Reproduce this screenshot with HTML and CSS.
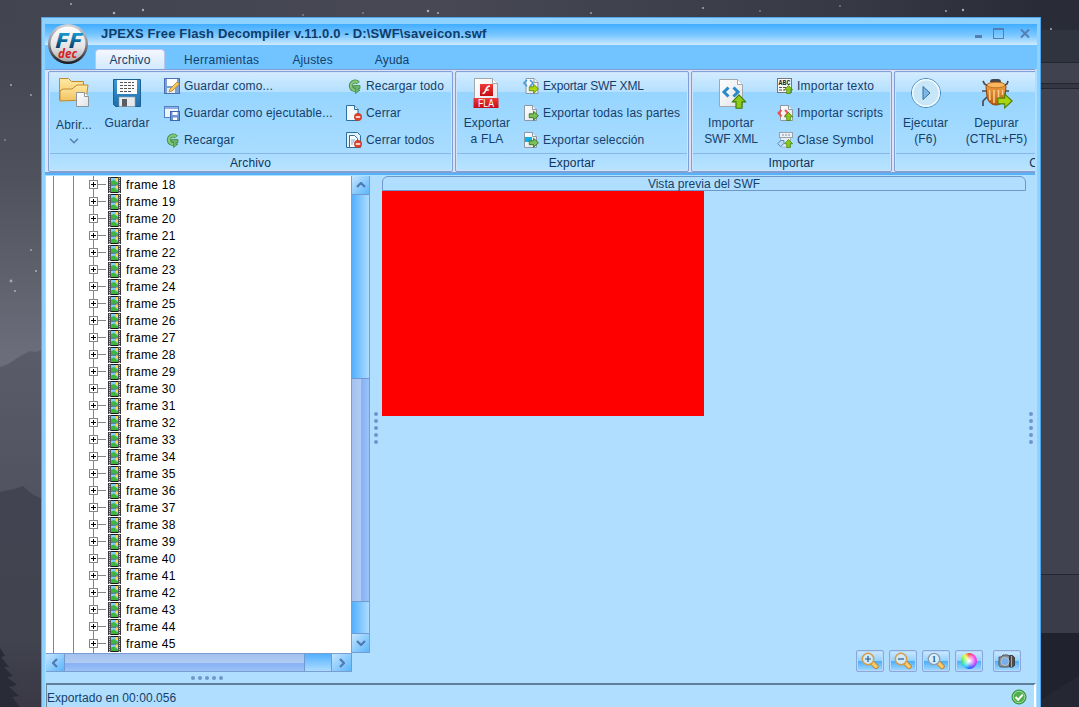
FILE: index.html
```html
<!DOCTYPE html>
<html lang="es">
<head>
<meta charset="utf-8">
<title>JPEXS Free Flash Decompiler</title>
<link rel="stylesheet" href="styles.css">
</head>
<body>
<svg class="defs" width="0" height="0">
  <defs>
    <linearGradient id="gFolder" x1="0" y1="0" x2="0" y2="1"><stop offset="0" stop-color="#ffe9a4"/><stop offset="1" stop-color="#f2c25e"/></linearGradient>
    <linearGradient id="gBlue" x1="0" y1="0" x2="0" y2="1"><stop offset="0" stop-color="#3d9ad6"/><stop offset="1" stop-color="#1f6ea8"/></linearGradient>
    <linearGradient id="gPaper" x1="0" y1="0" x2="1" y2="1"><stop offset="0" stop-color="#fff"/><stop offset="1" stop-color="#dfe3e6"/></linearGradient>
    <linearGradient id="gBug" x1="0" y1="0" x2="0" y2="1"><stop offset="0" stop-color="#f7a94a"/><stop offset="1" stop-color="#b85a0a"/></linearGradient>
    <linearGradient id="gBall" x1="0" y1="0" x2="0" y2="1"><stop offset="0" stop-color="#fff"/><stop offset=".6" stop-color="#e3e3e6"/><stop offset="1" stop-color="#a9a9ae"/></linearGradient>
    <linearGradient id="gRim" x1="0" y1="0" x2="0" y2="1"><stop offset="0" stop-color="#d2d4d8"/><stop offset=".5" stop-color="#8a8c92"/><stop offset="1" stop-color="#17181c"/></linearGradient>
    <linearGradient id="gFF" x1="0" y1="0" x2="0" y2="1"><stop offset=".1" stop-color="#19b4ee"/><stop offset=".8" stop-color="#073c66"/></linearGradient>
    <linearGradient id="gRed" x1="0" y1="0" x2="0" y2="1"><stop offset="0" stop-color="#ef3b3b"/><stop offset="1" stop-color="#c40d12"/></linearGradient>
    <symbol id="film" viewBox="0 0 13 16">
      <rect width="13" height="16" fill="#55555a"/><path d="M3 .500h7M3 8h7M3 15.500h7" stroke="#1d1d20"/>
      <rect x="3" y="1" width="7" height="6.500" fill="#7fd0fa"/><rect x="3" y="8.500" width="7" height="6.500" fill="#7fd0fa"/>
      <path d="M3 4l3-1 4 3v1.500H3zM3 11.500l3-1 4 3V15H3z" fill="#3fb63c"/><path d="M8 1h2v3H8zM8 8.500h2v3H8z" fill="#ffd84a"/>
      <path d="M1.500 1v15M11.500 1v15" stroke="#c9c9cd" stroke-dasharray="1 1"/>
      <path d="M.500 0v16M12.500 0v16" stroke="#38383c"/>
    </symbol>
    <symbol id="page" viewBox="0 0 16 16"><path d="M1.500.5h8l4 4v11h-12z" fill="url(#gPaper)" stroke="#8b98a5"/><path d="M9.500.5v4h4" fill="#f4f6f8" stroke="#8b98a5"/></symbol>
    <symbol id="bluepage" viewBox="0 0 16 16"><path d="M1.500.5h8l3.500 3.500v11.500H1.500z" fill="#f2f8fc" stroke="#2b6f9e"/><path d="M9.500.5v4h4" fill="#d5e9f6" stroke="#2b6f9e"/></symbol>
    <symbol id="minus" viewBox="0 0 8 8"><circle cx="4" cy="4" r="3.700" fill="#dd4430" stroke="#b92d1c" stroke-width=".6"/><path d="M1.800 4h4.400" stroke="#fff" stroke-width="1.500"/></symbol>
    <symbol id="right" viewBox="0 0 11 11"><path d="M.6 3.500h4.700V.8L10.400 5.500 5.300 10.200V7.500H.6z" fill="#7fbf58" stroke="#33782a" stroke-width="1"/></symbol>
    <symbol id="lime" viewBox="0 0 11 11"><path d="M.6 3.500h4.700V.8L10.400 5.500 5.300 10.200V7.500H.6z" fill="#a9d60e" stroke="#4f7f0c" stroke-width=".8"/></symbol>
    <symbol id="up" viewBox="0 0 10 10"><path d="M5 .6L9.500 5.300H7V9.500H3V5.300H.5z" fill="#8ccc16" stroke="#3f7a0c" stroke-width=".8"/></symbol>
    <symbol id="reload" viewBox="0 0 16 16">
      <path d="M12.300 5A4.300 4.300 0 1 0 9 12.100" fill="none" stroke="#3e8b44" stroke-width="4"/>
      <path d="M12 4.600A4.300 4.300 0 1 0 9 12.100" fill="none" stroke="#86c67c" stroke-width="2.400"/>
      <path d="M7.500 7.500h6.500v3h-1.800v1.500H14L9.500 15.500V9.800H7.500z" fill="#6ab56a" stroke="#3e8b44" stroke-width=".8"/>
    </symbol>
    <symbol id="lens" viewBox="0 0 20 18">
      <path d="M12 10.500l4 4" stroke="#b07a26" stroke-width="5.200" stroke-linecap="round"/>
      <path d="M12 10.500l4 4" stroke="#fbc966" stroke-width="3.600" stroke-linecap="round"/>
    </symbol>
  </defs>
</svg>

<div class="desktop">
  <svg class="wallpaper" viewBox="0 0 1079 707" width="1079" height="707">
    <defs>
      <linearGradient id="sky" x1="0" y1="0" x2="0" y2="1"><stop offset="0" stop-color="#40434d"/><stop offset=".25" stop-color="#4f515c"/><stop offset=".5" stop-color="#6b6e7a"/><stop offset="1" stop-color="#6b6e7a"/></linearGradient>
      <linearGradient id="hill" x1="0" y1="0" x2="0" y2="1"><stop offset="0" stop-color="#5a5d69"/><stop offset="1" stop-color="#50535f"/></linearGradient>
      <linearGradient id="near" x1="0" y1="0" x2="0" y2="1"><stop offset="0" stop-color="#424551"/><stop offset=".7" stop-color="#41434f"/><stop offset="1" stop-color="#3a3845"/></linearGradient>
      <linearGradient id="top" x1="0" y1="0" x2="1" y2="0"><stop offset="0" stop-color="#42444f"/><stop offset=".4" stop-color="#474853"/><stop offset=".8" stop-color="#363944"/><stop offset="1" stop-color="#262933"/></linearGradient>
    </defs>
    <rect width="1079" height="707" fill="url(#sky)"/>
    <rect width="1079" height="30" fill="url(#top)"/>
    <path d="M0 367l8-3 14-9 8-4 5 1 7-2v160H0z" fill="url(#hill)"/>
    <path d="M0 492l14-3 9-3 9 8 10 5v208H0z" fill="url(#near)"/>
    <path d="M0 648l5 8-4 1 8 10-5 0 9 9-6 1 10 8-8 2 10 9-7 1 8 10H0z" fill="#292b36"/>
    <g fill="#a9abb3">
      <circle cx="114" cy="13" r="1.300"/><circle cx="143" cy="10" r="1.200"/><circle cx="11" cy="281" r="1.400"/><circle cx="15" cy="291" r="1.100"/><circle cx="31" cy="250" r=".9"/><circle cx="11" cy="85" r="1"/><circle cx="31" cy="95" r=".9"/><circle cx="5" cy="140" r=".8"/><circle cx="36" cy="271" r="1.100"/><circle cx="428" cy="11" r="1.300"/><circle cx="438" cy="13" r="1"/><circle cx="303" cy="15" r=".8"/><circle cx="363" cy="13" r=".8"/><circle cx="591" cy="13" r=".9"/><circle cx="703" cy="8" r="1"/><circle cx="760" cy="11" r=".8"/><circle cx="946" cy="11" r="1"/><circle cx="963" cy="10" r="1.200"/><circle cx="71" cy="4" r="1"/><circle cx="840" cy="6" r=".8"/>
    </g>
    <path d="M1040 0h39v31h-39z" fill="#292c36"/><circle cx="1051" cy="29" r="1" fill="#a9abb3"/>
    <path d="M1040 30h39v604h-39z" fill="#40434f"/>
    <path d="M1040 30h39v32h-39z" fill="#30343f"/>
    <path d="M1040 62.500h39M1040 83.500h39M1040 88.500h39M1040 574.500h39" stroke="#23262f"/>
    <path d="M1040 84h39v4h-39z" fill="#353843"/>
    <path d="M1040 575h39v58h-39z" fill="#3a3d49"/>
    <path d="M1040 633h39v74h-39z" fill="#20232d"/><path d="M1040 700l39-24v31h-39z" fill="#252832"/>
  </svg>

  <main class="window">
    <svg class="logo" viewBox="0 0 42 42" width="42" height="42">
      <circle cx="21" cy="21" r="20" fill="url(#gRim)"/><circle cx="21" cy="21" r="17.500" fill="url(#gBall)"/>
      <text x="8" y="25" textLength="27" lengthAdjust="spacingAndGlyphs" class="logo-ff">FF</text>
      <text x="11" y="35" textLength="19" lengthAdjust="spacingAndGlyphs" class="logo-dec">dec</text>
    </svg>
    <header class="titlebar">
      <h1>JPEXS Free Flash Decompiler v.11.0.0 - D:\SWF\saveicon.swf</h1>
      <svg class="winbtns" width="58" height="16" viewBox="0 0 58 16" fill="none" stroke="#557eb3">
        <path d="M2 11.500h7" stroke-width="3"/><rect x="20.500" y="4" width="10" height="9.500"/><path d="M20 4h11" stroke-width="2"/><path d="M48 4.500l8 8M56 4.500l-8 8" stroke-width="2"/>
      </svg>
    </header>
    <nav class="tabs">
      <a class="tab active">Archivo</a><a class="tab t2">Herramientas</a><a class="tab t3">Ajustes</a><a class="tab t4">Ayuda</a>
    </nav>

    <section class="ribbon">
      <div class="band b1">
        <div class="tools">
          <div class="big abrir">
            <svg width="34" height="34" viewBox="0 0 34 34"><path d="M2.500 25V3.500h9l3 3h12V25z" fill="url(#gFolder)" stroke="#c28a30"/><path d="M3 26V16l3-2h9l5-4h11l-2 15z" fill="url(#gFolder)" stroke="#c28a30"/><path d="M19.500 17.500h8l4 4v10h-12z" fill="url(#gPaper)" stroke="#8b959e"/><path d="M27.500 17.500v4h4" fill="#fff" stroke="#8b959e"/></svg>
            <span>Abrir...</span>
            <svg class="chev" width="10" height="6" viewBox="0 0 10 6"><path d="M1 .8l4 4 4-4" fill="none" stroke="#557eb3" stroke-width="1.500"/></svg>
          </div>
          <div class="big guardar">
            <svg width="32" height="32" viewBox="0 0 32 32"><path d="M2.500 2.500h27v27h-25l-2-2z" fill="url(#gBlue)" stroke="#1c6194"/><rect x="6" y="3" width="20" height="14" fill="#f8fafb"/><path d="M9 5.500h14M9 8.500h14M9 11.500h14M9 14.500h12" stroke="#555" stroke-dasharray="3 1"/><rect x="8" y="20" width="16" height="9.500" fill="#e6e9ec" stroke="#97a4ae" stroke-width=".6"/><rect x="11" y="22" width="5" height="7.500" fill="#5a5d61"/></svg>
            <span>Guardar</span>
          </div>
          <div class="list l1">
            <div><svg viewBox="0 0 16 16"><rect x=".5" y=".5" width="15" height="15" fill="#7ba0d8" stroke="#4a70b4"/><rect x="3" y="1" width="10" height="7" fill="#fff"/><rect x="3" y="10" width="8" height="5" fill="#e8edf5"/><path d="M5 14l1-3 7-7 2.500 2-7.500 7z" fill="#f9c95c" stroke="#b9832e" stroke-width=".8"/></svg><span>Guardar como...</span></div>
            <div><svg viewBox="0 0 16 16"><rect x=".5" y="1.500" width="14" height="11" fill="#eef4fc" stroke="#547fc3"/><path d="M1 3h13" stroke="#8cb0e4" stroke-width="2"/><rect x="6.500" y="6.500" width="9" height="9" fill="#6e96d3" stroke="#3c66ad"/><path d="M8.500 7h5v3h-5zM9 12.500h4V15H9z" fill="#fff"/></svg><span>Guardar como ejecutable...</span></div>
            <div><svg viewBox="0 0 16 16"><use href="#reload"/></svg><span>Recargar</span></div>
          </div>
          <div class="list l2">
            <div><svg viewBox="0 0 16 16"><use href="#reload"/></svg><span>Recargar todo</span></div>
            <div><svg viewBox="0 0 16 16"><use href="#bluepage" x="-1"/><use href="#minus" x="8" y="8" width="8" height="8"/></svg><span>Cerrar</span></div>
            <div><svg viewBox="0 0 16 16"><path d="M.500.500h11l3 3v12H.500z" fill="#e6f2fa" stroke="#2b6f9e"/><path d="M3.500 3.500h5l3 3v9h-8z" fill="#f8fcff" stroke="#2b6f9e"/><path d="M5 8h4M5 10h3M5 12h2" stroke="#7faed0"/><use href="#minus" x="8" y="8" width="8" height="8"/></svg><span>Cerrar todos</span></div>
          </div>
        </div>
        <footer>Archivo</footer>
      </div>
      <div class="band b2">
        <div class="tools">
          <div class="big fla">
            <svg width="32" height="32" viewBox="0 0 32 32"><path d="M3.500 1.500h18l5 5v24h-23z" fill="url(#gPaper)" stroke="#a3a7ab"/><path d="M21.500 1.500v5h5" fill="#fff" stroke="#a3a7ab"/><rect x="9" y="7" width="13" height="12" fill="url(#gRed)"/><path d="M19 9c-3.500 0-3.500 2.500-4.300 4.500-.7 1.700-1.500 3-3.200 3M13.800 13h4" fill="none" stroke="#fff" stroke-width="1.600"/><path d="M2.500 21h25v10h-25z" fill="url(#gRed)"/><text x="7" y="29.500" textLength="16" lengthAdjust="spacingAndGlyphs" class="fla-text">FLA</text></svg>
            <span>Exportar<br>a FLA</span>
          </div>
          <div class="list l3">
            <div><svg viewBox="0 0 16 16"><use href="#page" x="1.500"/><path d="M4 2L1 5l3 3.500M7 2l3 3-3 3.500" fill="none" stroke="#4a9ddb" stroke-width="1.700"/><use href="#lime" x="5.500" y="5.500" width="10.500" height="10.500"/></svg><span class="caps">Exportar SWF XML</span></div>
            <div><svg viewBox="0 0 16 16"><use href="#page"/><use href="#right" x="5.500" y="5.500" width="10.500" height="10.500"/></svg><span>Exportar todas las partes</span></div>
            <div><svg viewBox="0 0 16 16"><use href="#page"/><rect x="2" y="5" width="7" height="5" fill="#12afe2"/><use href="#right" x="5.500" y="5.500" width="10.500" height="10.500"/></svg><span>Exportar selección</span></div>
          </div>
        </div>
        <footer>Exportar</footer>
      </div>
      <div class="band b3">
        <div class="tools">
          <div class="big xml">
            <svg width="32" height="32" viewBox="0 0 32 32"><path d="M4.500 2.500h18l5 5v22h-23z" fill="url(#gPaper)" stroke="#a3a7ab"/><path d="M22.500 2.500v5h5" fill="#fff" stroke="#a3a7ab"/><path d="M13.500 10.500L9 15l4.500 4.500M18.500 10.500L23 15l-4.500 4.500" fill="none" stroke="#2989c9" stroke-width="3"/><use href="#up" x="16.500" y="17" width="15" height="15"/></svg>
            <span>Importar<br><b class="caps">SWF XML</b></span>
          </div>
          <div class="list l4">
            <div><svg viewBox="0 0 16 16"><rect x=".5" y=".5" width="14" height="14" fill="#f7f7f7" stroke="#777"/><text x="1.500" y="6.500" textLength="12" class="abc">ABC</text><path d="M2 9.500h9M2 12h6" stroke="#555" stroke-dasharray="3 1"/><use href="#up" x="7" y="7" width="9" height="9"/></svg><span>Importar texto</span></div>
            <div><svg viewBox="0 0 16 16"><use href="#page" x="2"/><path d="M4.500 5L1.500 8l3 3.500M8 5l3 3-3 3.500" fill="none" stroke="#f05050" stroke-width="2"/><use href="#up" x="7" y="7" width="9" height="9"/></svg><span>Importar scripts</span></div>
            <div><svg viewBox="0 0 16 16"><rect x="2.500" y=".5" width="13" height="5" fill="#eef1f4" stroke="#96a2ae"/><path d="M5 3h8" stroke="#7a8fa8" stroke-dasharray="2 1"/><path d="M3.500 6v9h10V6" fill="#e5ecf3" stroke="#a8b4c0"/><path d="M.5 11.500l3.500-3h3v3l-3.500 3z" fill="#bad9f3" stroke="#4f8fc9"/><use href="#up" x="7" y="7" width="9" height="9"/></svg><span>Clase Symbol</span></div>
          </div>
        </div>
        <footer>Importar</footer>
      </div>
      <div class="band b4">
        <div class="tools">
          <div class="big run">
            <svg width="32" height="32" viewBox="0 0 32 32"><circle cx="16" cy="16" r="14.500" fill="#c7e7f9" stroke="#3d80b4"/><circle cx="16" cy="16" r="13.300" fill="none" stroke="#f3fbff" stroke-width="1.500"/><path d="M13 9.500l7 6.500-7 6.500z" fill="#7db9e4" stroke="#2e6ea3"/></svg>
            <span>Ejecutar<br>(F6)</span>
          </div>
          <div class="big debug">
            <svg width="34" height="32" viewBox="0 0 34 32"><path d="M8 9L4.500 7 3 4M23 9l4-2 1-3M6 14H2M25 14h4M7 20l-4 4v5" fill="none" stroke="#474c55" stroke-width="1.700"/><path d="M10 5q0-3 3-3h5q3 0 3 3z" fill="#42464e"/><path d="M6 9c3-5 17-5 20 0l-1 11c-1 5-5 8-9 8s-8-3-9-8z" fill="url(#gBug)" stroke="#904508"/><ellipse cx="16" cy="8" rx="9" ry="2.800" fill="#f9b75f" stroke="#a95c12" stroke-width=".7"/><path d="M9.500 13l.5 10M14 13v13M18.500 13v13M22.500 13v5" stroke="#f9cb8c" stroke-width="1.600"/><use href="#lime" x="17" y="16" width="16" height="16"/></svg>
            <span>Depurar<br>(CTRL+F5)</span>
          </div>
        </div>
        <footer>Control</footer>
      </div>
    </section>

    <div class="content">
      <aside class="side">
        <div class="treewrap">
          <ul class="tree">
            <li><svg><use href="#film"/></svg>frame 18</li>
            <li><svg><use href="#film"/></svg>frame 19</li>
            <li><svg><use href="#film"/></svg>frame 20</li>
            <li><svg><use href="#film"/></svg>frame 21</li>
            <li><svg><use href="#film"/></svg>frame 22</li>
            <li><svg><use href="#film"/></svg>frame 23</li>
            <li><svg><use href="#film"/></svg>frame 24</li>
            <li><svg><use href="#film"/></svg>frame 25</li>
            <li><svg><use href="#film"/></svg>frame 26</li>
            <li><svg><use href="#film"/></svg>frame 27</li>
            <li><svg><use href="#film"/></svg>frame 28</li>
            <li><svg><use href="#film"/></svg>frame 29</li>
            <li><svg><use href="#film"/></svg>frame 30</li>
            <li><svg><use href="#film"/></svg>frame 31</li>
            <li><svg><use href="#film"/></svg>frame 32</li>
            <li><svg><use href="#film"/></svg>frame 33</li>
            <li><svg><use href="#film"/></svg>frame 34</li>
            <li><svg><use href="#film"/></svg>frame 35</li>
            <li><svg><use href="#film"/></svg>frame 36</li>
            <li><svg><use href="#film"/></svg>frame 37</li>
            <li><svg><use href="#film"/></svg>frame 38</li>
            <li><svg><use href="#film"/></svg>frame 39</li>
            <li><svg><use href="#film"/></svg>frame 40</li>
            <li><svg><use href="#film"/></svg>frame 41</li>
            <li><svg><use href="#film"/></svg>frame 42</li>
            <li><svg><use href="#film"/></svg>frame 43</li>
            <li><svg><use href="#film"/></svg>frame 44</li>
            <li><svg><use href="#film"/></svg>frame 45</li>
          </ul>
          <div class="vbar">
            <div class="sbtn"><svg width="10" height="6" viewBox="0 0 10 6"><path d="M1 5l4-4 4 4"/></svg></div>
            <div class="thumb"></div><div class="track"></div><div class="thumb end"></div>
            <div class="sbtn"><svg width="10" height="6" viewBox="0 0 10 6"><path d="M1 1l4 4 4-4"/></svg></div>
          </div>
        </div>
        <div class="hbar">
          <div class="sbtn"><svg width="6" height="10" viewBox="0 0 6 10"><path d="M5 1L1 5l4 4"/></svg></div>
          <div class="track"></div><div class="thumb"></div>
          <div class="sbtn"><svg width="6" height="10" viewBox="0 0 6 10"><path d="M1 1l4 4-4 4"/></svg></div>
        </div>
        <div class="dots row"><i></i><i></i><i></i><i></i><i></i></div>
      </aside>
      <div class="dots col"><i></i><i></i><i></i><i></i><i></i></div>
      <section class="preview">
        <h2>Vista previa del SWF</h2>
        <div class="stage"></div>
        <div class="viewbtns">
          <button><svg viewBox="0 0 20 18"><use href="#lens"/><circle cx="8" cy="7" r="5.700" fill="#cfe9fb" stroke="#d69c45" stroke-width="1.500"/><path d="M5 7h6M8 4v6" stroke="#245a8b" stroke-width="1.200"/></svg></button>
          <button><svg viewBox="0 0 20 18"><use href="#lens"/><circle cx="8" cy="7" r="5.700" fill="#cfe9fb" stroke="#d69c45" stroke-width="1.500"/><path d="M5 7h6" stroke="#245a8b" stroke-width="1.200"/></svg></button>
          <button><svg viewBox="0 0 20 18"><use href="#lens"/><circle cx="8" cy="7" r="5.700" fill="#d9eefb" stroke="#8c9cab" stroke-width="1.300"/><text x="5.800" y="10" class="one">1</text></svg></button>
          <button><i class="wheel"></i></button>
          <button class="cam"><svg viewBox="0 0 20 18"><path d="M2 5h2l2-2h5l1.500 1.500V14L11 15H3.500L2 13.500z" fill="#8b8e93" stroke="#55585d"/><path d="M12.500 3.500h3l2 2v8l-2 1.500h-3z" fill="#4f4d4c" stroke="#3b3e43"/><path d="M14.500 4v11" stroke="#b8a590"/><circle cx="8" cy="9.500" r="4" fill="#79aee8" stroke="#b4c2d2"/></svg></button>
        </div>
      </section>
      <div class="dots col right"><i></i><i></i><i></i><i></i><i></i></div>
    </div>

    <footer class="status">
      <span>Exportado en 00:00.056</span>
      <svg width="16" height="16" viewBox="0 0 16 16"><circle cx="8" cy="8" r="7" fill="#4fb04c" stroke="#2f8a35"/><circle cx="8" cy="8" r="5.800" fill="none" stroke="#a6dba0" stroke-width=".9"/><path d="M4.500 8l2.700 2.700 4.500-5" fill="none" stroke="#fff" stroke-width="2"/></svg>
    </footer>
  </main>
</div>
</body>
</html>
```
FILE: styles.css
```css
* { box-sizing: border-box; }
body { margin: 0; width: 1079px; height: 707px; overflow: hidden; font: 12px "Liberation Sans", Arial, sans-serif; letter-spacing: .15px; color: #14406b; }
svg { display: block; flex: none; }
.defs { position: absolute; }
.desktop { position: relative; width: 1079px; height: 707px; overflow: hidden; background: #40424c; }
.wallpaper { position: absolute; left: 0; top: 0; }

.window { position: absolute; left: 41px; top: 17px; width: 1000px; height: 690px; padding: 6px 3px 0; display: flex; flex-direction: column; background: #b0deff; border: 1px solid #4fa6ea; border-bottom: 0; box-shadow: inset 3px 0 #8fd2ff, inset -3px 0 #8fd2ff, inset 0 6px #8fd2ff; }
.logo { position: absolute; left: 5px; top: 5px; z-index: 2; }
.logo-ff { font: italic bold 21px "Open Sans", sans-serif; fill: url(#gFF); letter-spacing: 0; }
.logo-dec { font: italic bold 12px "Open Sans", sans-serif; fill: #d81e1e; letter-spacing: 0; }
.titlebar { height: 21px; flex: none; display: flex; justify-content: space-between; padding: 0 6px 0 56px; background: linear-gradient(#40adff, #7cc8ff 55%, #cdeaff); }
.titlebar h1 { margin: 0; font-size: 13px; line-height: 19px; letter-spacing: .16px; color: #0f3c69; white-space: nowrap; }
.winbtns { margin-top: 1px; }
.tabs { height: 24px; flex: none; display: flex; padding: 4px 0 0 50px; background: #71c4ff; }
.tab { line-height: 22px; margin-left: 19px; }
.tab.active { width: 70px; height: 22px; margin-left: 0; text-align: center; line-height: 21px; background: linear-gradient(#f4f7ff, #cfe7fd); border: 1px solid #b9c6ec; border-bottom: 0; border-radius: 4px 4px 0 0; }
.t2 { letter-spacing: .28px; }
.t3 { margin-left: 33px; }
.t4 { margin-left: 42px; }

.ribbon { height: 106px; flex: none; display: flex; gap: 2px; padding: 2px 0 2px 3px; margin-right: 2px; overflow: hidden; background: linear-gradient(#7f9fd6 1px, #dde3f6 1px 103px, #7f9fd6 103px 104px, #55b2f7 104px); }
.band { height: 101px; flex: none; display: flex; flex-direction: column; border: 1px solid #7f9fd6; box-shadow: inset 0 0 0 1px #cfe4fb; border-radius: 2px; background: linear-gradient(#d3ecff, #b4e0ff 20px, #96d5ff 20px, #a9dcff 80px, #b8e3ff); }
.b1 { width: 405px; } .b2 { width: 234px; } .b3 { width: 201px; } .b4 { width: 310px; }
.tools { height: 81px; display: flex; }
.band footer { height: 18px; margin: 0 1px; text-align: center; line-height: 18px; border-top: 1px solid #86b9e8; color: #10335a; }
.big { display: flex; flex-direction: column; align-items: center; text-align: center; line-height: 16px; white-space: nowrap; padding-top: 5px; }
.big span { margin-top: 6px; }
.abrir { width: 50px; padding-top: 3px; } .abrir span { margin-top: 8px; }
.chev { margin-top: 5px; }
.guardar { width: 56px; }
.fla { width: 62px; } .xml { width: 78px; } .run { width: 61px; } .debug { width: 81px; }
.caps { font-weight: normal; letter-spacing: -.16px; }
.list { display: flex; flex-direction: column; white-space: nowrap; }
.list div { height: 27px; display: flex; align-items: center; gap: 4px; }
.list svg { width: 16px; height: 16px; }
.l1 { width: 182px; margin-left: 9px; } .l3 { margin-left: 5px; } .l4 { margin-left: 7px; letter-spacing: .22px; }
.fla-text { font: 10px "Liberation Sans", sans-serif; fill: #fff; letter-spacing: 0; }
.abc { font: bold 6.5px "Liberation Mono", monospace; fill: #222; letter-spacing: 0; }

.content { height: 508px; flex: none; display: flex; padding-top: 1px; }
.side { width: 325px; padding-left: 1px; }
.treewrap { display: flex; height: 477px; }
.tree { width: 306px; height: 477px; margin: 0; padding: 0; overflow: hidden; list-style: none; color: #000; letter-spacing: .3px; background: linear-gradient(#858585, #858585) 7px 0/1px 100% no-repeat, linear-gradient(#858585, #858585) 27px 0/1px 100% no-repeat, linear-gradient(#858585, #858585) 47px 0/1px 100% no-repeat, #fff; }
.tree li { height: 17px; display: flex; align-items: center; gap: 5px; padding: 1px 0 0 43px; line-height: 16px; }
.tree li::before { content: ""; width: 17px; height: 9px; margin: -1px -3px 0 0; background: linear-gradient(#000, #000) 2px 4px/5px 1px no-repeat, linear-gradient(#000, #000) 4px 2px/1px 5px no-repeat, linear-gradient(#fff, #fff) 1px 1px/7px 7px no-repeat, linear-gradient(#858585, #858585) 0 0/9px 9px no-repeat, linear-gradient(#858585, #858585) 9px 4px/8px 1px no-repeat; }
.tree svg { width: 13px; height: 16px; }
.vbar { width: 19px; display: flex; flex-direction: column; border: solid #7a9ed2; border-width: 0 1px; }
.vbar > div { border-bottom: 1px solid #6f9bd0; }
.sbtn { display: flex; align-items: center; justify-content: center; background: linear-gradient(135deg, #c4e5ff, #5cb6fb); }
.sbtn path { fill: none; stroke: #5078b4; stroke-width: 2.2; }
.vbar .sbtn { height: 19px; }
.vbar .thumb { height: 184px; background: linear-gradient(90deg, #52b0ff, #aedcff); }
.vbar .track { height: 223px; background: linear-gradient(90deg, #a4c0ee, #b2ccf3 55%, #86b0f4 56%, #9cc4f8); }
.vbar .thumb.end { height: 32px; }
.hbar { width: 306px; height: 19px; display: flex; border: 1px solid #7a9ed2; border-width: 1px 0; }
.hbar > div { border-right: 1px solid #6f9bd0; }
.hbar .sbtn { width: 19px; } .hbar .sbtn:last-child { width: 20px; }
.hbar .track { width: 241px; background: linear-gradient(#a4c0ee, #b2ccf3 55%, #86b0f4 56%, #9cc4f8); }
.hbar .thumb { width: 27px; background: linear-gradient(#52b0ff, #aedcff); }
.dots { display: flex; gap: 3px; }
.dots i { width: 4px; height: 4px; border-radius: 2px; background: #6d97c8; }
.dots.row { padding: 4px 0 0 145px; }
.dots.col { width: 12px; flex-direction: column; padding: 236px 0 0 4px; }
.dots.right { width: 8px; padding-left: 3px; }
.preview { width: 644px; display: flex; flex-direction: column; }
.preview h2 { margin: 0; height: 15px; flex: none; font: inherit; letter-spacing: .02px; line-height: 14px; text-align: center; border: 1px solid #6f97cb; border-radius: 6px 6px 0 0; }
.stage { width: 322px; height: 225px; background: #f00; }
.viewbtns { display: flex; justify-content: flex-end; gap: 5px; margin: auto 5px 11px 0; }
.viewbtns button { width: 28px; height: 22px; padding: 0; display: flex; align-items: center; justify-content: center; border: 1px solid #8aa6da; border-radius: 2px; background: linear-gradient(#cdeaff, #93d2ff 48%, #4aaefb 50%, #a5daff); box-shadow: inset 0 0 0 1px #b8d8fa; }
.viewbtns svg { width: 20px; height: 18px; }
.viewbtns .cam { margin-left: 5px; }
.one { font: bold 9px "Liberation Serif", serif; fill: #245a8b; letter-spacing: 0; }
.wheel { width: 16px; height: 16px; border-radius: 50%; background: radial-gradient(#fff 5%, transparent 65%), conic-gradient(#f44 0, #f4d 12%, #c3f 30%, #25f 48%, #2cf 60%, #3e5 75%, #ef3 90%, #f44); }

.status { flex: 1; display: flex; justify-content: space-between; padding: 4px 7px 0 0; margin-right: 1px; border-top: 2px solid #5f7f9c; border-left: 1px solid #6d8499; border-right: 2px solid #fff; margin-left: 1px; }
.status span { line-height: 19px; letter-spacing: .05px; }
```
